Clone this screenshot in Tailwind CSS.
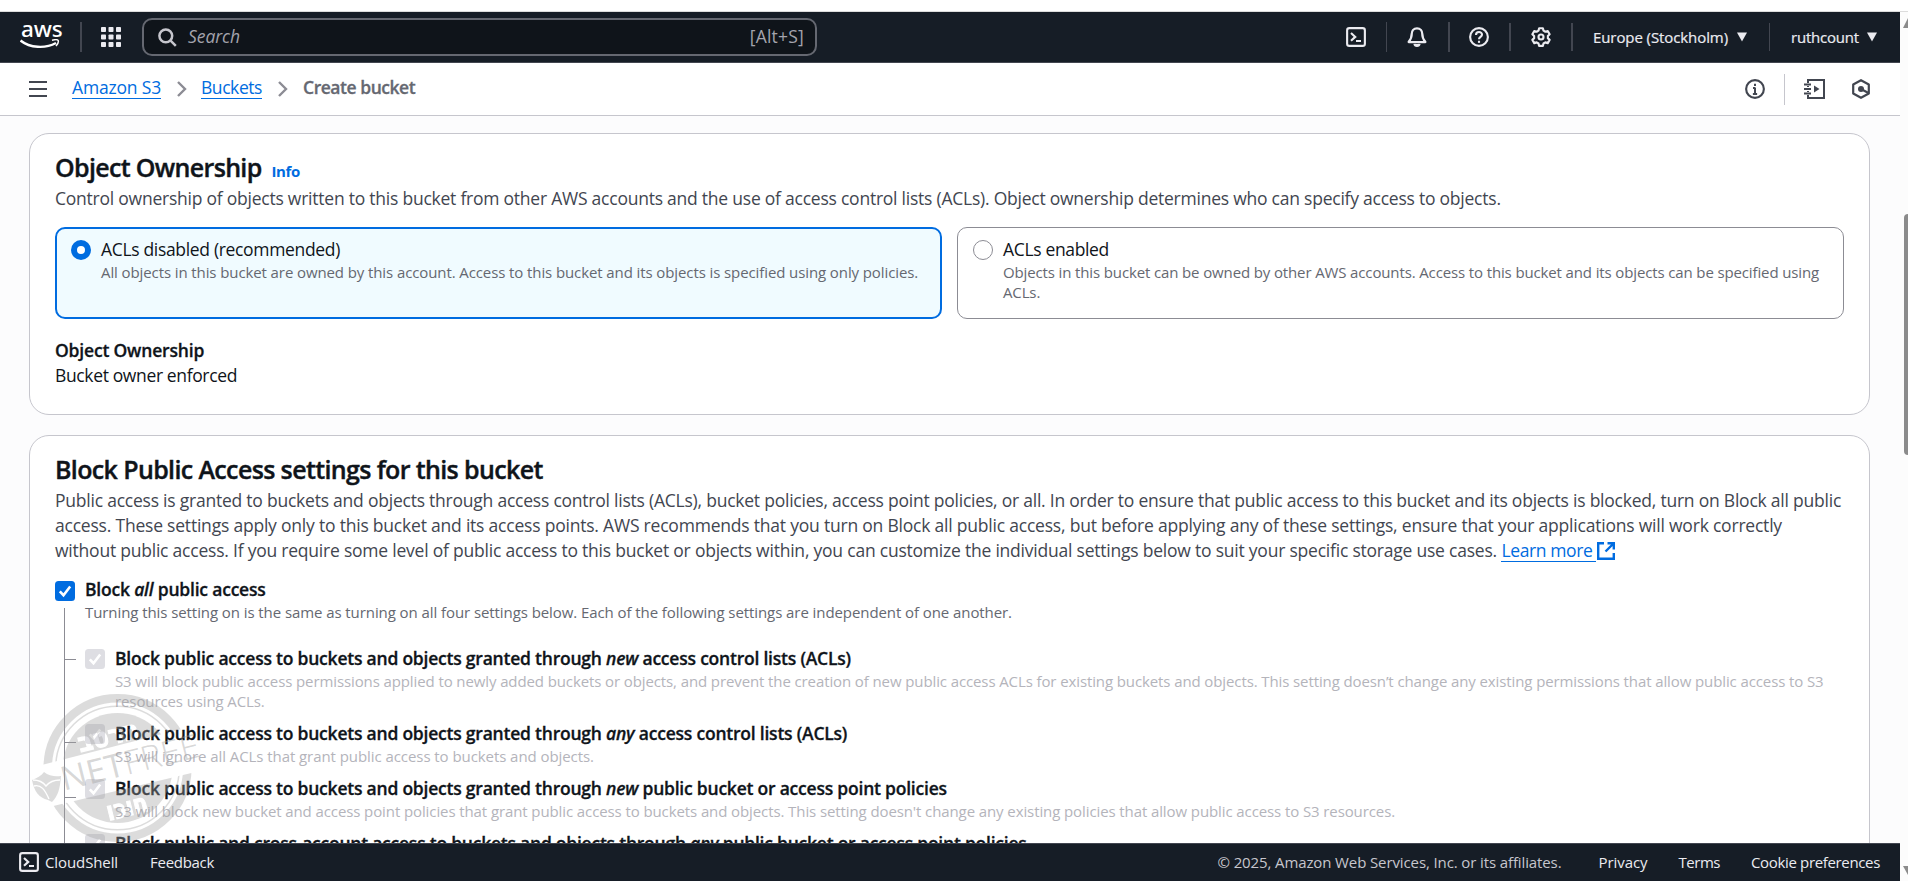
<!DOCTYPE html>
<html lang="en">
<head>
<meta charset="utf-8">
<title>Create bucket | S3</title>
<script src="https://cdn.jsdelivr.net/npm/@tailwindcss/browser@4"></script>
</head>
<body class="w-[1908px] h-[881px] overflow-hidden bg-white font-['Open_Sans','Noto_Sans',sans-serif] text-[17.5px] leading-[25px] text-[#0f141a] whitespace-nowrap">
<div class="h-[12px] border-b border-[#dcdcdc]"></div>
<div class="flex h-[869px]">
<div class="relative flex flex-col w-[1900px] h-full overflow-hidden">

<!-- Global navigation -->
<header class="flex items-center shrink-0 h-[51px] bg-[#161d26] border-b border-[#424650] text-[#ebebf0]">
  <div class="relative ml-5 w-[40px] h-[30px] text-white">
    <div class="absolute left-[1px] top-[-8px] font-['Noto_Sans',sans-serif] font-medium text-[22.5px] leading-[30px] tracking-[-0.1px]">aws</div>
    <svg class="absolute left-0 top-[17px]" width="40" height="11" viewBox="0 0 40 11" fill="none" stroke="#fff"><path d="M.5 1.500C10 9 25 10 36 4" stroke-width="2.400"/><path d="M32 1.200c2.600-.6 5.800-.6 6.200.3.400 1.100-.6 3.800-2.200 5.600" stroke-width="1.500"/></svg>
  </div>
  <div class="ml-5 w-[2px] h-[30px] bg-[#424650]"></div>
  <svg class="ml-[19px]" width="20" height="20" fill="#ebebf0"><g id="r"><rect width="5" height="5" rx=".8"/><rect x="7.500" width="5" height="5" rx=".8"/><rect x="15" width="5" height="5" rx=".8"/></g><use href="#r" y="7.500"/><use href="#r" y="15"/></svg>
  <div class="ml-[21px] flex items-center w-[675px] h-[38px] rounded-[10px] border-2 border-[#656871] bg-[#0f141a] pl-[14px] pr-[11px] text-[#a4a4ad]">
    <svg width="19" height="19" viewBox="0 0 19 19" fill="none" stroke="#c6c6cd" stroke-width="2.500"><circle cx="7.800" cy="7.800" r="6.400"/><path d="M12.300 12.300l5.500 5.500"/></svg>
    <span class="ml-[11px] mt-[-1px] italic tracking-[-0.06px]">Search</span>
    <span class="ml-auto mt-[-1px] tracking-[0.2px]">[Alt+S]</span>
  </div>
  <svg class="ml-[529px]" width="20" height="20" viewBox="0 0 16 16" fill="none" stroke="#ebebf0" stroke-width="1.700"><rect x=".9" y=".9" width="14.200" height="14.200" rx="1.800"/><path d="M4 4.800l3.400 3.100L4 11M8 11.200h4"/></svg>
  <div class="ml-[20px] w-px h-[30px] bg-[#424650]"></div>
  <svg class="ml-[20px]" width="20" height="20" viewBox="0 0 16 16" fill="none" stroke="#ebebf0" stroke-width="1.800" stroke-linejoin="round"><path d="M8 1C5.300 1 3.800 3 3.800 5.400c0 3.400-1 4.800-2.500 6.600h13.400c-1.500-1.800-2.500-3.200-2.500-6.600C12.200 3 10.700 1 8 1Z"/><path d="M6 13.500c.3 2 3.700 2 4 0" fill="#ebebf0"/></svg>
  <div class="ml-[21px] w-[2px] h-[30px] bg-[#424650]"></div>
  <svg class="ml-[19px]" width="20" height="20" viewBox="0 0 16 16" fill="none" stroke="#ebebf0" stroke-width="1.700"><circle cx="8" cy="8" r="7.100"/><path d="M5.600 6.300C5.600 3.200 10.500 3.300 10.400 6.200 10.300 8 8 7.900 8 9.900"/><path d="M8 11v1.700"/></svg>
  <div class="ml-[20px] w-[2px] h-[28px] bg-[#424650]"></div>
  <svg class="ml-[20px]" width="20" height="20" viewBox="0 0 16 16" fill="none" stroke="#ebebf0" stroke-width="1.700" stroke-linejoin="round"><path d="M6.500 1h3l.5 1.900 1.500.9 1.900-.6 1.500 2.600-1.400 1.400v1.700l1.400 1.400-1.500 2.600-1.900-.6-1.500.9-.5 1.900h-3L6 13.200l-1.500-.9-1.900.6-1.500-2.600 1.400-1.400V7.200L1.100 5.800l1.500-2.600 1.900.6L6 2.900Z"/><circle cx="8" cy="8" r="2"/></svg>
  <div class="ml-[20px] w-[2px] h-[28px] bg-[#424650]"></div>
  <span class="ml-[20px] text-[15px] tracking-[-0.09px] [-webkit-text-stroke:0.2px]">Europe (Stockholm)</span>
  <svg class="ml-[9px]" width="10" height="10" fill="#ebebf0"><path d="M0 .5h10L5 9.500z"/></svg>
  <div class="ml-[22px] w-px h-[28px] bg-[#424650]"></div>
  <span class="ml-[21px] text-[15px] tracking-[-0.2px] [-webkit-text-stroke:0.2px]">ruthcount</span>
  <svg class="ml-2" width="10" height="10" fill="#ebebf0"><path d="M0 .5h10L5 9.500z"/></svg>
</header>

<!-- Breadcrumbs -->
<nav class="flex items-center shrink-0 h-[53px] bg-white border-b border-[#c6c6cd] pl-[29px] pr-[29px]">
  <svg width="18" height="16" fill="#424650"><path d="M0 0h18v2H0zM0 7h18v2H0zM0 14h18v2H0z"/></svg>
  <a class="ml-[25px] mt-[-2px] h-[22px] leading-[21px] border-b border-[#006ce0] text-[#006ce0] tracking-[-0.18px]">Amazon S3</a>
  <svg class="ml-[16px]" width="10" height="16" fill="none" stroke="#8c8c94" stroke-width="2.400"><path d="M1 1l7 7-7 7"/></svg>
  <a class="ml-[14px] mt-[-2px] h-[22px] leading-[21px] border-b border-[#006ce0] text-[#006ce0] tracking-[-0.43px]">Buckets</a>
  <svg class="ml-[16px]" width="10" height="16" fill="none" stroke="#8c8c94" stroke-width="2.400"><path d="M1 1l7 7-7 7"/></svg>
  <span class="ml-[15px] mt-[-3px] font-semibold text-[#656871] tracking-[-0.46px] [-webkit-text-stroke:0.3px]">Create bucket</span>
  <svg class="ml-auto" width="20" height="20" viewBox="0 0 16 16" fill="none" stroke="#424650" stroke-width="1.700"><circle cx="8" cy="8" r="7.100"/><path d="M8 3.800v1.700M8 6.800v5.400M6.400 7.200H8M6.300 11.900h3.400" stroke-width="1.600"/></svg>
  <div class="ml-[19px] w-px h-[31px] bg-[#c6c6cd]"></div>
  <svg class="ml-[19px]" width="22" height="20" viewBox="0 0 22 20" fill="none" stroke="#424650" stroke-width="2"><path d="M4 4V1h16v18H4v-3M4 7v1M4 12v1M0 5.500h7M0 10h7M0 14.500h7"/><path d="M10 6.500v7l5.500-3.500z" fill="#424650" stroke="none"/></svg>
  <svg class="ml-[25px]" width="20" height="20" viewBox="0 0 20 20" fill="none" stroke="#424650" stroke-width="2.200" stroke-linejoin="round"><path d="M10 1.200l7.800 4.300v9L10 18.800l-7.800-4.300v-9z"/><circle cx="10" cy="10" r="3" fill="#424650" stroke="none"/><path d="M10 10l7 3.800"/></svg>
</nav>

<!-- Form content -->
<main class="flex flex-col grow min-h-0 overflow-hidden bg-[#fcfcfd] pt-[17px] pl-[29px] pr-[30px] gap-[20px]">
  <section class="shrink-0 h-[282px] rounded-[20px] border border-[#c6c6cd] bg-white pt-[18px] px-[25px]">
    <div class="flex items-baseline">
      <h2 class="text-[25px] leading-[30px] font-semibold tracking-[-0.66px] [-webkit-text-stroke:0.4px]">Object Ownership</h2>
      <a class="ml-[10px] text-[15px] leading-[20px] font-bold text-[#006ce0] tracking-[-0.44px]">Info</a>
    </div>
    <p class="mt-[4px] text-[#424650] tracking-[-0.234px]">Control ownership of objects written to this bucket from other AWS accounts and the use of access control lists (ACLs). Object ownership determines who can specify access to objects.</p>
    <div class="mt-[16px] flex gap-[15px]">
      <div class="flex w-[887px] h-[92px] rounded-[10px] border-2 border-[#006ce0] bg-[#f0fbff] pt-[8px] pl-[14px]">
        <div class="mt-[3px] size-5 rounded-full border-[6px] border-[#006ce0] bg-white"></div>
        <div class="ml-[10px]">
          <p class="tracking-[-0.33px]">ACLs disabled (recommended)</p>
          <p class="text-[15px] leading-[20px] text-[#656871] tracking-[-0.1px]">All objects in this bucket are owned by this account. Access to this bucket and its objects is specified using only policies.</p>
        </div>
      </div>
      <div class="flex w-[887px] h-[92px] rounded-[10px] border border-[#8c8c94] bg-white pt-[9px] pl-[15px]">
        <div class="mt-[3px] size-5 rounded-full border border-[#8c8c94] bg-white"></div>
        <div class="ml-[10px]">
          <p class="tracking-[-0.34px]">ACLs enabled</p>
          <p class="text-[15px] leading-[20px] text-[#656871] tracking-[-0.131px]">Objects in this bucket can be owned by other AWS accounts. Access to this bucket and its objects can be specified using<br>ACLs.</p>
        </div>
      </div>
    </div>
    <p class="mt-[19px] font-semibold tracking-[-0.18px] [-webkit-text-stroke:0.3px]">Object Ownership</p>
    <p class="tracking-[-0.363px]">Bucket owner enforced</p>
  </section>

  <section class="shrink-0 h-[600px] rounded-[20px] border border-[#c6c6cd] bg-white pt-[18px] px-[25px]">
    <h2 class="text-[25px] leading-[30px] font-semibold tracking-[-0.63px] [-webkit-text-stroke:0.4px]">Block Public Access settings for this bucket</h2>
    <p class="mt-[4px] text-[#424650]">
      <span class="tracking-[-0.227px]">Public access is granted to buckets and objects through access control lists (ACLs), bucket policies, access point policies, or all. In order to ensure that public access to this bucket and its objects is blocked, turn on Block all public</span><br>
      <span class="tracking-[-0.21px]">access. These settings apply only to this bucket and its access points. AWS recommends that you turn on Block all public access, but before applying any of these settings, ensure that your applications will work correctly</span><br>
      <span class="tracking-[-0.22px]">without public access. If you require some level of public access to this bucket or objects within, you can customize the individual settings below to suit your specific storage use cases.</span>
      <a class="inline-flex h-[24px] items-start text-[#006ce0]"><span class="h-[24px] border-b border-[#006ce0] pr-[4px] tracking-[-0.383px]">Learn more</span><svg class="ml-px mt-[4px]" width="18" height="18" fill="none" stroke="#006ce0" stroke-width="2.400"><path d="M7 1.200H1.200v15.600h15.600V11M10.500 1.200h6.300v6.300M16.500 1.500L8.500 9.500"/></svg></a>
    </p>
    <div class="mt-[14px] flex">
      <div class="relative w-[30px] shrink-0">
        <svg class="mt-[4px]" width="20" height="20"><rect width="20" height="20" rx="3.500" fill="#006ce0"/><path d="M4.800 10.300l3.700 3.900 6.700-8.700" fill="none" stroke="#fff" stroke-width="2.600"/></svg>
        <div class="mt-[7px] ml-[9px] w-px h-[300px] bg-[#8c8c94]"></div>
      </div>
      <div class="h-[300px]">
        <p class="font-semibold tracking-[-0.2px] [-webkit-text-stroke:0.3px]">Block <i>all</i> public access</p>
        <p class="text-[15px] leading-[20px] text-[#656871] tracking-[-0.078px]">Turning this setting on is the same as turning on all four settings below. Each of the following settings are independent of one another.</p>
        <div class="mt-[24px] flex flex-col gap-[10px]">
          <div class="flex">
            <div class="-ml-[20px] mt-[13px] w-[11px] h-px bg-[#8c8c94]"></div>
            <svg class="ml-[9px] mt-[3px] shrink-0" width="20" height="20"><rect width="20" height="20" rx="3.500" fill="#dedee3"/><path d="M4.800 10.300l3.700 3.900 6.700-8.700" fill="none" stroke="#fff" stroke-width="2.600"/></svg>
            <div class="ml-[10px]">
              <p class="font-semibold tracking-[-0.22px] [-webkit-text-stroke:0.3px]">Block public access to buckets and objects granted through <i>new</i> access control lists (ACLs)</p>
              <p class="text-[15px] leading-[20px] text-[#b4b4bb] tracking-[-0.108px]">S3 will block public access permissions applied to newly added buckets or objects, and prevent the creation of new public access ACLs for existing buckets and objects. This setting doesn’t change any existing permissions that allow public access to S3<br>resources using ACLs.</p>
            </div>
          </div>
          <div class="flex">
            <div class="-ml-[20px] mt-[21px] w-[11px] h-px bg-[#8c8c94]"></div>
            <svg class="ml-[9px] mt-[3px] shrink-0" width="20" height="20"><rect width="20" height="20" rx="3.500" fill="#dedee3"/><path d="M4.800 10.300l3.700 3.900 6.700-8.700" fill="none" stroke="#fff" stroke-width="2.600"/></svg>
            <div class="ml-[10px]">
              <p class="font-semibold tracking-[-0.22px] [-webkit-text-stroke:0.3px]">Block public access to buckets and objects granted through <i>any</i> access control lists (ACLs)</p>
              <p class="text-[15px] leading-[20px] text-[#b4b4bb] tracking-[-0.065px]">S3 will ignore all ACLs that grant public access to buckets and objects.</p>
            </div>
          </div>
          <div class="flex">
            <div class="-ml-[20px] mt-[21px] w-[11px] h-px bg-[#8c8c94]"></div>
            <svg class="ml-[9px] mt-[3px] shrink-0" width="20" height="20"><rect width="20" height="20" rx="3.500" fill="#dedee3"/><path d="M4.800 10.300l3.700 3.900 6.700-8.700" fill="none" stroke="#fff" stroke-width="2.600"/></svg>
            <div class="ml-[10px]">
              <p class="font-semibold tracking-[-0.22px] [-webkit-text-stroke:0.3px]">Block public access to buckets and objects granted through <i>new</i> public bucket or access point policies</p>
              <p class="text-[15px] leading-[20px] text-[#b4b4bb] tracking-[-0.1px]">S3 will block new bucket and access point policies that grant public access to buckets and objects. This setting doesn't change any existing policies that allow public access to S3 resources.</p>
            </div>
          </div>
          <div class="flex">
            <div class="-ml-[20px] mt-[21px] w-[11px] h-px bg-[#8c8c94]"></div>
            <svg class="ml-[9px] mt-[3px] shrink-0" width="20" height="20"><rect width="20" height="20" rx="3.500" fill="#dedee3"/><path d="M4.800 10.300l3.700 3.900 6.700-8.700" fill="none" stroke="#fff" stroke-width="2.600"/></svg>
            <div class="ml-[10px]">
              <p class="font-semibold tracking-[-0.235px] [-webkit-text-stroke:0.3px]">Block public and cross-account access to buckets and objects through <i>any</i> public bucket or access point policies</p>
            </div>
          </div>
        </div>
      </div>
    </div>
  </section>
</main>

<!-- Filter stamp overlay -->
<svg class="absolute left-[26px] top-[673px]" width="180" height="158" viewBox="0 0 180 158">
  <defs><mask id="band" maskUnits="userSpaceOnUse" x="0" y="0" width="180" height="160"><rect width="180" height="160" fill="#fff"/><path d="M-10 86.600L190 35.300V82L-10 130z" fill="#000"/>
    <g font-family="'DejaVu Sans',sans-serif" font-weight="700" fill="#000" stroke="#000" stroke-width="1.200" text-anchor="middle"><text transform="rotate(-14 82 50)" x="82" y="60" font-size="26" textLength="62" lengthAdjust="spacingAndGlyphs">חרטב</text><text transform="rotate(-14 101 122)" x="101" y="131" font-size="26" textLength="42" lengthAdjust="spacingAndGlyphs">חוכו</text></g>
  </mask>
  <mask id="veins" maskUnits="userSpaceOnUse" x="0" y="0" width="180" height="160"><rect width="180" height="160" fill="#fff"/><path d="M7 95c6 0 10 2 13 6 4-5 8-6 14-6M8 101c7-2 11 4 15 13" fill="none" stroke="#000" stroke-width="1.400"/></mask></defs>
  <g stroke="#a0a0a0" stroke-opacity=".37" fill="none" mask="url(#band)">
    <circle cx="91.500" cy="83" r="69.800" stroke-width="8.500"/><circle cx="91.500" cy="83" r="61.800" stroke-width="1.500"/><circle cx="91.500" cy="83" r="55" fill="#a0a0a0" fill-opacity=".37" stroke="none"/>
  </g>
  <path mask="url(#veins)" d="M6 95C11 93 15 91 18 87c5 4 11 5 17 4-1 13-3 20-9 26l-4-2C13 113 8 106 6 95z" fill="#a0a0a0" fill-opacity=".37"/>
  <g transform="rotate(-14 91.500 80)" font-family="'Open Sans',sans-serif" fill="#a0a0a0" fill-opacity=".42"><text x="33" y="92" font-size="33" textLength="142" lengthAdjust="spacingAndGlyphs"><tspan font-weight="500">N</tspan><tspan font-weight="400">ET</tspan><tspan font-weight="300">FREE</tspan></text></g>
</svg>

<!-- Footer -->
<footer class="relative flex items-center shrink-0 h-[38px] bg-[#161d26] border-t border-[#424650] pl-[19px] pr-[20px] pb-px text-[15px] leading-[20px] text-[#ebebf0]">
  <svg width="20" height="20" viewBox="0 0 16 16" fill="none" stroke="#ebebf0" stroke-width="1.700"><rect x=".9" y=".9" width="14.200" height="14.200" rx="1.800"/><path d="M4 4.800l3.400 3.100L4 11M8 11.200h4"/></svg>
  <span class="ml-[6px] tracking-[-0.1px]">CloudShell</span>
  <span class="ml-[32px] tracking-[-0.29px]">Feedback</span>
  <span class="ml-auto text-[#c6c6cd] tracking-[-0.113px]">© 2025, Amazon Web Services, Inc. or its affiliates.</span>
  <span class="ml-[37px] tracking-[-0.067px]">Privacy</span>
  <span class="ml-[31px] tracking-[-0.47px]">Terms</span>
  <span class="ml-[31px] tracking-[-0.345px]">Cookie preferences</span>
</footer>
</div>

<!-- Scrollbar -->
<div class="relative w-[8px] h-full bg-[#fcfcfc] overflow-hidden">
  <svg class="absolute left-[3px] top-[6px]" width="10" height="11" fill="#8b8b8b"><path d="M0 10L5 0l5 10z"/></svg>
  <div class="absolute left-[4px] top-[202px] w-[8px] h-[241px] rounded-[4px] bg-[#8b8b8b]"></div>
  <svg class="absolute left-[3px] top-[854px]" width="10" height="10" fill="#8b8b8b"><path d="M0 0h10L5 9z"/></svg>
</div>
</div>
</body>
</html>
